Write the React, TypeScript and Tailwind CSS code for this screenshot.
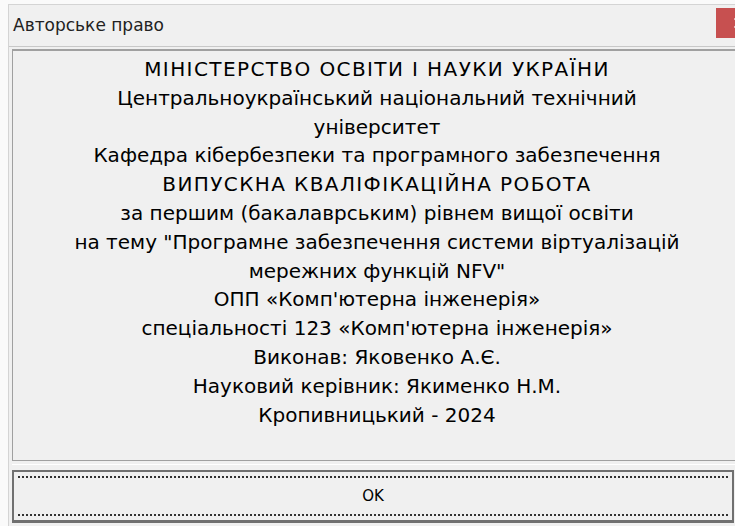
import { X } from "lucide-react"

const lines: { text: string; caps?: boolean }[] = [
	{ text: "МІНІСТЕРСТВО ОСВІТИ І НАУКИ УКРАЇНИ", caps: true },
	{ text: "Центральноукраїнський національний технічний" },
	{ text: "університет" },
	{ text: "Кафедра кібербезпеки та програмного забезпечення" },
	{ text: "ВИПУСКНА КВАЛІФІКАЦІЙНА РОБОТА", caps: true },
	{ text: "за першим (бакалаврським) рівнем вищої освіти" },
	{ text: "на тему \"Програмне забезпечення системи віртуалізацій" },
	{ text: "мережних функцій NFV\"" },
	{ text: "ОПП «Комп'ютерна інженерія»" },
	{ text: "спеціальності 123 «Комп'ютерна інженерія»" },
	{ text: "Виконав: Яковенко А.Є." },
	{ text: "Науковий керівник: Якименко Н.М." },
	{ text: "Кропивницький - 2024" },
]

export default function App() {
	return (
		<div className="w-[735px] h-[526px] overflow-hidden bg-[#fafafa] pl-[8px] pt-[4px] font-['DejaVu_Sans',sans-serif] text-black">
			<div className="w-[760px] h-[530px] bg-[#f0f0f0] border-l border-t border-[#d4d4d4] flex flex-col">
				{/* title bar */}
				<div className="relative h-[41px] shrink-0 flex items-center pl-[4px] text-[17px] text-[#222]">
					<span>Авторське право</span>
					<div className="absolute left-[707px] top-[3px] w-[46px] h-[30px] bg-[#c75050] flex items-center pl-[15px]">
						<X size={16} strokeWidth={2.5} className="text-white" />
					</div>
				</div>
				<div className="h-px bg-[#c8c8c8]" />
				<div className="flex flex-col pl-[3px]">
					{/* text panel */}
					<div className="mt-[2px] w-[730px] h-[412px] border border-[#a0a0a0] border-t-2 flex flex-col items-center pt-[4px] text-[20px] leading-[28.8px] whitespace-nowrap">
						{lines.map((line, i) => (
							<div key={i} className={line.caps ? "tracking-[1.4px]" : ""}>
								{line.text}
							</div>
						))}
					</div>
					<div className="h-[3px]" />
					<div className="h-px w-[730px] bg-white" />
					<div className="h-[5px]" />
					{/* OK button */}
					<div className="w-[722px] h-[53px] border-2 border-[#707070] border-b-[3px] p-[4px]">
						<div className="w-full h-full border-y-2 border-dotted border-[#333] flex items-center justify-center text-[15px]">
							OK
						</div>
					</div>
				</div>
			</div>
		</div>
	)
}
